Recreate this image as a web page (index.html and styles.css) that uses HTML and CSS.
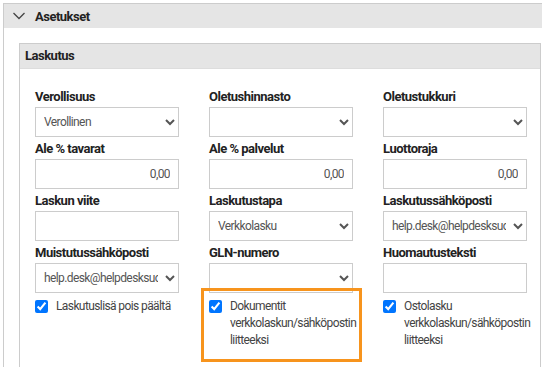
FILE: index.html
```html
<!DOCTYPE html>
<html lang="fi">

<head>
    <meta charset="UTF-8">
    <meta name="viewport" content="width=device-width, initial-scale=1.0">
    <title>Asetukset</title>
    <link rel="stylesheet" href="styles.css">
</head>

<body>
    <div class="panel">
        <div class="panel-header">
            <svg class="chevron" width="12" height="8" viewBox="0 0 12 8">
                <polyline points="0.5,1 6,6.5 11.5,1" fill="none" stroke="#444" stroke-width="1.3" />
            </svg>
            <span>Asetukset</span>
        </div>
        <div class="panel-body">
            <div class="subpanel">
                <div class="subpanel-header">Laskutus</div>
                <div class="form-grid">
                    <div class="field">
                        <label>Verollisuus</label>
                        <select>
                            <option>Verollinen</option>
                        </select>
                    </div>
                    <div class="field">
                        <label>Oletushinnasto</label>
                        <select>
                            <option></option>
                        </select>
                    </div>
                    <div class="field">
                        <label>Oletustukkuri</label>
                        <select>
                            <option></option>
                        </select>
                    </div>

                    <div class="field">
                        <label>Ale % tavarat</label>
                        <input type="text" class="number" value="0,00">
                    </div>
                    <div class="field">
                        <label>Ale % palvelut</label>
                        <input type="text" class="number" value="0,00">
                    </div>
                    <div class="field">
                        <label>Luottoraja</label>
                        <input type="text" class="number" value="0,00">
                    </div>

                    <div class="field">
                        <label>Laskun viite</label>
                        <input type="text" value="">
                    </div>
                    <div class="field">
                        <label>Laskutustapa</label>
                        <select>
                            <option>Verkkolasku</option>
                        </select>
                    </div>
                    <div class="field">
                        <label>Laskutussähköposti</label>
                        <select>
                            <option>help.desk@helpdesksuomi.fi</option>
                        </select>
                    </div>

                    <div class="field">
                        <label>Muistutussähköposti</label>
                        <select>
                            <option>help.desk@helpdesksuomi.fi</option>
                        </select>
                    </div>
                    <div class="field">
                        <label>GLN-numero</label>
                        <select>
                            <option></option>
                        </select>
                    </div>
                    <div class="field">
                        <label>Huomautusteksti</label>
                        <input type="text" value="">
                    </div>

                    <label class="check">
                        <input type="checkbox" checked>
                        <span>Laskutuslisä pois päältä</span>
                    </label>
                    <label class="check highlighted">
                        <input type="checkbox" checked>
                        <span>Dokumentit verkkolaskun/sähköpostin liitteeksi</span>
                    </label>
                    <label class="check">
                        <input type="checkbox" checked>
                        <span>Ostolasku verkkolaskun/sähköpostin liitteeksi</span>
                    </label>
                </div>
            </div>
        </div>
    </div>
</body>

</html>
```

FILE: styles.css
```css
body {
    margin: 0;
    font-family: Roboto, "Liberation Sans", sans-serif;
    color: #333;
    background-color: #fff;
    overflow: hidden;
}

.panel {
    margin: 3px 0 0 3px;
    width: 539px;
    border: 1px solid #ccc;
    border-bottom: none;
}

.panel-header {
    display: flex;
    align-items: center;
    height: 24px;
    padding-left: 9px;
    background-color: #e5e5e5;
    font-size: 13px;
    font-weight: bold;
    letter-spacing: -0.5px;
    color: #222;
}

.chevron {
    margin-right: 10px;
}

.panel-body {
    padding: 15px 0 0 15px;
}

.subpanel {
    border: 1px solid #ccc;
    border-bottom: none;
    width: 520px;
}

.subpanel-header {
    height: 24px;
    line-height: 24px;
    padding-left: 5px;
    background-color: #e5e5e5;
    border-bottom: 1px solid #ddd;
    font-size: 13px;
    font-weight: bold;
    letter-spacing: -0.5px;
    color: #222;
}

.form-grid {
    display: grid;
    grid-template-columns: repeat(3, 144px);
    column-gap: 30px;
    row-gap: 4px;
    padding: 20px 0 20px 15px;
}

.field {
    display: flex;
    flex-direction: column;
}

.field label {
    font-size: 13px;
    line-height: 16px;
    font-weight: bold;
    letter-spacing: -0.5px;
    color: #222;
    margin-bottom: 2px;
}

.field select,
.field input {
    box-sizing: border-box;
    height: 30px;
    width: 100%;
    margin: 0;
    border: 1px solid #ccc;
    border-radius: 0;
    background-color: #fff;
    font-family: Roboto, "Liberation Sans", sans-serif;
    font-size: 12px;
    letter-spacing: -0.6px;
    color: #555;
}

.field select {
    padding: 0 4px;
}

.field input {
    padding: 0 8px;
}

.field input.number {
    text-align: right;
}

.check {
    position: relative;
    display: flex;
    align-items: flex-start;
    margin-top: 1px;
    font-size: 12px;
    letter-spacing: -0.6px;
    line-height: 17px;
    color: #444;
}

.check input {
    flex-shrink: 0;
    margin: 2px 8px 0 0;
    width: 13px;
    height: 13px;
}

.highlighted::after {
    content: "";
    position: absolute;
    left: -8px;
    top: -10px;
    width: 155px;
    height: 68px;
    border: 3px solid #f7941d;
}
```
